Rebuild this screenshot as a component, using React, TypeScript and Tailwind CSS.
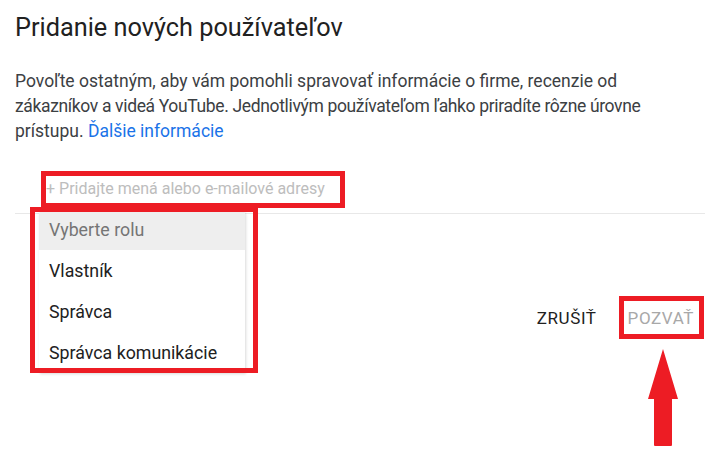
import React from 'react';

const roles = ['Vlastník', 'Správca', 'Správca komunikácie'];

const App: React.FC = () => {
  return (
    <div className="relative h-[462px] w-[724px] overflow-hidden bg-white px-[15px] font-['Roboto',sans-serif]">
      <h1 className="pt-[12px] text-[25.3px] leading-[32px] text-[#212121]">
        Pridanie nových používateľov
      </h1>
      <p className="mt-[25px] text-[17.5px] leading-[25px] text-[#3c4043]">
        Povoľte ostatným, aby vám pomohli spravovať informácie o firme, recenzie od
        <br />
        <span className="tracking-[-0.35px]">
          zákazníkov a videá YouTube. Jednotlivým používateľom ľahko priradíte rôzne úrovne
        </span>
        <br />
        prístupu. <span className="text-[#1a73e8]">Ďalšie informácie</span>
      </p>

      {/* input + role menu */}
      <div className="relative mt-[28px] h-[42px] w-[690px] border-b border-[#e8e8e8]">
        <div className="pl-[31px] pt-[7px] text-[16px] leading-[20px] text-[#bdbdbd]">
          + Pridajte mená alebo e-mailové adresy
        </div>
        <div className="absolute left-[24px] top-[37px] z-10 w-[206px] rounded-t-[6px] bg-white shadow-[1px_1px_3px_rgba(0,0,0,0.15)]">
          <div className="flex h-[41px] items-center rounded-t-[6px] bg-[#eeeeee] pl-[10px] pt-[1px] text-[17.8px] text-[#757575]">
            Vyberte rolu
          </div>
          {roles.map((r) => (
            <div key={r} className="flex h-[41px] items-center pl-[10px] pt-[1px] text-[17.8px] text-[#212121]">
              {r}
            </div>
          ))}
        </div>
      </div>

      {/* actions */}
      <div className="mt-[84px] flex justify-end gap-[31px] pr-[15px] text-[17px] leading-[40px] tracking-[0.6px]">
        <span className="text-[#212121]">ZRUŠIŤ</span>
        <span className="text-[#a8a8a8]">POZVAŤ</span>
      </div>

      {/* annotations */}
      <div className="absolute left-[41px] top-[171px] h-[37px] w-[304px] border-[5px] border-[#ed1c24]" />
      <div className="absolute left-[30px] top-[207px] z-20 h-[166px] w-[228px] border-[5px] border-[#ed1c24]" />
      <div className="absolute left-[619px] top-[296px] h-[43px] w-[85px] border-[5px] border-[#ed1c24]" />
      <svg className="absolute left-[646px] top-[347px]" width="34" height="101" viewBox="0 0 34 101">
        <path d="M17 2 L32 52 L26 52 L26 98 Q26 99 25 99 L9 99 Q8 99 8 98 L8 52 L2 52 Z" fill="#ed1c24" />
      </svg>
    </div>
  );
};

export default App;
